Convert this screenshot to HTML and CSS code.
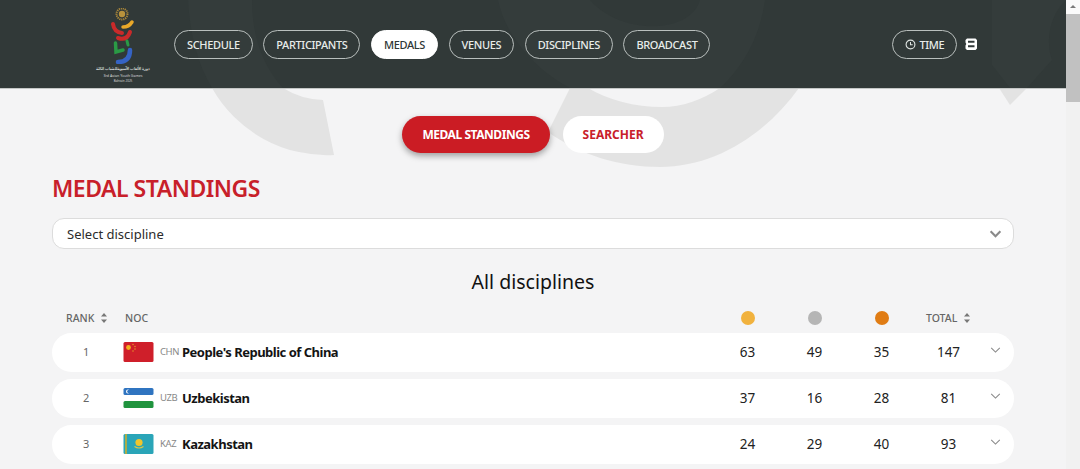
FILE: index.html
```html
<!DOCTYPE html>
<html lang="en">
<head>
<meta charset="utf-8">
<title>Medal Standings</title>
<link rel="stylesheet" href="styles.css">
</head>
<body>
<div class="shell">
  <div class="page">
    <svg class="watermark" viewBox="0 0 1066 469" width="1066" height="469" aria-hidden="true">
      <path d="M212 88 A132 132 0 0 0 334 155 L323 100 A80 80 0 0 1 283 88 Z" fill="#e3e3e3"/>
      <path d="M570 88 L548 132 C580 155 620 167 660 167 C715 167 765 135 799 88 L720 88 C702 100 682 107 662 107 C635 107 608 100 588 88 Z" fill="#e3e3e3"/>
      <path d="M999 88 L1010 105 L1027 88 Z" fill="#e3e3e3"/>
    </svg>
    <header class="topbar">
      <svg class="header-art" viewBox="0 0 1066 88" width="1066" height="88" aria-hidden="true">
        <path d="M188 0 C190 35 198 65 212 88 L283 88 C262 65 252 35 252 0 Z" fill="#343c3b"/>
        <path d="M498 0 C505 35 535 70 570 88 L720 88 C745 65 760 35 765 0 L700 0 C690 35 620 35 590 0 Z" fill="#343c3b"/>
        <path d="M992 0 L992 65 L1010 88 L1027 88 L1052 60 C1045 40 1050 15 1066 0 Z" fill="#343c3b"/>
      </svg>
      <div class="logo">
        <svg class="logo-mark" viewBox="0 0 40 56" width="40" height="56" aria-hidden="true">
          <circle cx="19" cy="6" r="5.500" fill="none" stroke="#a8863a" stroke-width="2" stroke-dasharray="1.200 .8"/>
          <circle cx="19" cy="6" r="3.200" fill="#b8923c"/>
          <path d="M10 16 Q11 24 19 25" stroke="#c92a2a" stroke-width="4" fill="none" stroke-linecap="round"/>
          <path d="M20 19 Q26 19 29 14" stroke="#e9a829" stroke-width="3.500" fill="none" stroke-linecap="round"/>
          <path d="M15 30 Q24 33 27 24" stroke="#c92a2a" stroke-width="4" fill="none" stroke-linecap="round"/>
          <path d="M12.500 35 L13 44 L20 42" stroke="#2a9a45" stroke-width="3.500" fill="none" stroke-linecap="round"/>
          <path d="M24 33 L25 37" stroke="#2a9a45" stroke-width="3" fill="none" stroke-linecap="round"/>
          <path d="M27 42 Q27 54 15 54" stroke="#3563c4" stroke-width="4.500" fill="none" stroke-linecap="round"/>
        </svg>
        <span class="logo-line logo-strong">دورة الألعاب الآسيوية للشباب الثالثة</span>
        <span class="logo-line">3rd Asian Youth Games</span>
        <span class="logo-line logo-tiny">Bahrain 2025</span>
      </div>
      <nav class="nav">
        <a class="pill">SCHEDULE</a>
        <a class="pill">PARTICIPANTS</a>
        <a class="pill pill-active">MEDALS</a>
        <a class="pill">VENUES</a>
        <a class="pill">DISCIPLINES</a>
        <a class="pill">BROADCAST</a>
      </nav>
      <div class="tools">
        <a class="pill pill-time">
          <svg viewBox="0 0 12 12" width="11" height="11" aria-hidden="true"><circle cx="6" cy="6" r="4.800" fill="none" stroke="#dfe5e2" stroke-width="1.200"/><path d="M6 3.200V6.200H8.400" fill="none" stroke="#dfe5e2" stroke-width="1.100"/></svg>
          TIME
        </a>
        <svg class="tool-icon" viewBox="0 0 12 12" width="12" height="12" aria-hidden="true"><path fill="#fff" fill-rule="evenodd" d="M2 .5H10.500L12 2V10.500L10.500 12H2L.5 10.500V7.500L1.300 6 .5 4.500V2ZM3 2.700V4.800H9.500V2.700ZM3 7.200V9.300H9.500V7.200Z"/></svg>
      </div>
    </header>
    <main class="content">
      <div class="tabs">
        <a class="tab tab-on">MEDAL STANDINGS</a>
        <a class="tab">SEARCHER</a>
      </div>
      <h1 class="title">MEDAL STANDINGS</h1>
      <div class="select">
        <span>Select discipline</span>
        <svg viewBox="0 0 14 9" width="13" height="8" aria-hidden="true"><path d="M1.500 1.500 7 7 12.500 1.500" fill="none" stroke="#8a8a8a" stroke-width="2.400"/></svg>
      </div>
      <h2 class="subtitle">All disciplines</h2>
      <div class="row-head">
        <div class="c-rank head">RANK
          <svg class="sort" viewBox="0 0 8 12" width="8" height="12" aria-hidden="true"><path d="M4 1 7 4.500H1ZM4 11 1 7.500H7Z" fill="#777"/></svg>
        </div>
        <div class="c-noc head head-noc">NOC</div>
        <div class="c-num"><span class="medal gold"></span></div>
        <div class="c-num"><span class="medal silver"></span></div>
        <div class="c-num"><span class="medal bronze"></span></div>
        <div class="c-total head">TOTAL
          <svg class="sort" viewBox="0 0 8 12" width="8" height="12" aria-hidden="true"><path d="M4 1 7 4.500H1ZM4 11 1 7.500H7Z" fill="#777"/></svg>
        </div>
      </div>
      <div class="row">
        <div class="c-rank rank">1</div>
        <div class="c-noc">
          <svg class="flag" viewBox="0 0 30 20" width="31" height="20" aria-hidden="true"><rect width="30" height="20" rx="1.500" fill="#cf1f2a"/><circle cx="5" cy="5.500" r="2.400" fill="#f2b21c"/><g fill="#e8a52a"><circle cx="9.500" cy="2.500" r=".7"/><circle cx="11.500" cy="4.500" r=".7"/><circle cx="11.500" cy="7" r=".7"/><circle cx="9.500" cy="9" r=".7"/></g></svg>
          <span class="code">CHN</span><span class="name">People's Republic of China</span>
        </div>
        <div class="c-num">63</div><div class="c-num">49</div><div class="c-num">35</div><div class="c-total num">147</div>
        <svg class="expand" viewBox="0 0 12 7" width="11" height="6" aria-hidden="true"><path d="M1 1 6 6 11 1" fill="none" stroke="#888" stroke-width="1.200"/></svg>
      </div>
      <div class="row">
        <div class="c-rank rank">2</div>
        <div class="c-noc">
          <svg class="flag" viewBox="0 0 30 20" width="31" height="20" aria-hidden="true"><rect width="30" height="7" rx="1.500" fill="#2f74c0"/><rect y="7" width="30" height="6" fill="#fff"/><rect y="13" width="30" height="7" rx="1.500" fill="#20943e"/><circle cx="4.500" cy="3.500" r="2" fill="#fff"/><circle cx="5.500" cy="3.500" r="1.800" fill="#2f74c0"/></svg>
          <span class="code">UZB</span><span class="name">Uzbekistan</span>
        </div>
        <div class="c-num">37</div><div class="c-num">16</div><div class="c-num">28</div><div class="c-total num">81</div>
        <svg class="expand" viewBox="0 0 12 7" width="11" height="6" aria-hidden="true"><path d="M1 1 6 6 11 1" fill="none" stroke="#888" stroke-width="1.200"/></svg>
      </div>
      <div class="row">
        <div class="c-rank rank">3</div>
        <div class="c-noc">
          <svg class="flag" viewBox="0 0 30 20" width="31" height="20" aria-hidden="true"><rect width="30" height="20" rx="1.500" fill="#2aa5b8"/><rect x="1.500" width="2" height="20" fill="#a9ad4a"/><circle cx="15.500" cy="8.500" r="3.600" fill="#f0c52c"/><path d="M11 12.500Q15.500 15.500 20 12.500" stroke="#e4c73c" fill="none" stroke-width="1.200"/></svg>
          <span class="code">KAZ</span><span class="name">Kazakhstan</span>
        </div>
        <div class="c-num">24</div><div class="c-num">29</div><div class="c-num">40</div><div class="c-total num">93</div>
        <svg class="expand" viewBox="0 0 12 7" width="11" height="6" aria-hidden="true"><path d="M1 1 6 6 11 1" fill="none" stroke="#888" stroke-width="1.200"/></svg>
      </div>
    </main>
  </div>
  <div class="scrollbar">
    <div class="scroll-up"></div>
    <div class="scroll-thumb"></div>
  </div>
</div>
</body>
</html>
```

FILE: styles.css
```css
* { box-sizing: border-box; }
html, body { margin: 0; height: 100%; overflow: hidden; }
body { font-family: "Noto Sans", "Open Sans", sans-serif; background: #f4f4f5; color: #1b1b1b; }
.shell { display: flex; width: 1080px; height: 469px; overflow: hidden; }
.page { position: relative; flex: 0 0 1066px; height: 469px; overflow: hidden; }
.watermark { position: absolute; left: 0; top: 0; }
.topbar { position: relative; height: 89px; background: #313938; border-bottom: 1px solid #c4c7c6; display: flex; align-items: center; padding-left: 88px; }
.header-art { position: absolute; left: 0; top: 0; }
.logo { position: relative; width: 70px; margin-right: 16px; height: 84px; display: flex; flex-direction: column; align-items: center; color: #d8d8d8; font-size: 3.600px; line-height: 6.500px; padding-top: 6px; white-space: nowrap; }
.logo-mark { margin-bottom: 2px; flex: none; }
.logo-strong { font-weight: 700; }
.logo-tiny { font-size: 3px; line-height: 5px; }
.nav { position: relative; display: flex; gap: 10.500px; }
.pill { height: 29px; padding: 0 12px; border: 1px solid #b9bfbd; border-radius: 15px; display: inline-flex; align-items: center; gap: 3px; font-size: 11px; font-weight: 500; letter-spacing: -.35px; color: #e8ecea; white-space: nowrap; }
.pill-active { background: #fff; border-color: #fff; color: #2f3736; }
.tools { position: relative; margin-left: 182px; display: flex; align-items: center; gap: 8px; }
.tool-icon { display: block; }
.content { position: relative; padding: 27px 52px 0; }
.tabs { display: flex; justify-content: center; gap: 13px; }
.tab { height: 37px; padding: 0 20px; border-radius: 19px; background: #fff; color: #c8202a; display: flex; align-items: center; font-size: 12px; font-weight: 700; }
.tab-on { background: #cb1c24; color: #fff; letter-spacing: -.45px; box-shadow: 0 3px 6px rgba(0,0,0,.35); }
.title { margin: 21px 0 0; font-size: 23px; line-height: 28px; font-weight: 600; color: #c8202a; letter-spacing: -.5px; }
.select { margin-top: 16px; height: 31px; background: #fff; border: 1px solid #dcdcdc; border-radius: 12px; display: flex; align-items: center; justify-content: space-between; padding: 1px 11px 0 14px; font-size: 13px; color: #2b2b2b; }
.subtitle { margin: 20px 0 0; text-align: center; font-size: 19.500px; line-height: 26px; font-weight: 400; color: #111; }
.row-head, .row { display: grid; grid-template-columns: 71px 1fr 67px 67px 67px 67px 32px; align-items: center; }
.row-head { margin: 10px 0 2px; height: 26px; }
.head { font-size: 10.500px; color: #666; font-weight: 500; white-space: nowrap; }
.head-noc { padding-left: 2px; }
.sort { vertical-align: -2px; margin-left: 3px; }
.c-rank { padding-left: 14px; }
.c-noc { display: flex; align-items: center; }
.c-num { text-align: center; font-size: 13.500px; color: #222; }
.c-total { text-align: center; }
.medal { display: block; width: 14px; height: 14px; margin: 0 auto 1px; border-radius: 50%; }
.gold { background: #f1b23e; }
.silver { background: #b5b5b5; }
.bronze { background: #e07c14; }
.row { position: relative; height: 39px; margin-bottom: 7px; padding-bottom: 2px; background: #fff; border-radius: 20px; }
.rank { font-size: 11px; color: #666; padding-left: 31px; }
.flag { display: block; flex: none; margin-right: 6px; }
.code { font-size: 9.500px; letter-spacing: -.4px; color: #888; width: 22px; }
.name { font-size: 13px; font-weight: 700; color: #141414; letter-spacing: -.5px; white-space: nowrap; }
.num { font-size: 13.500px; color: #222; }
.expand { position: absolute; right: 13px; top: 14px; }
.scrollbar { flex: 0 0 14px; background: #f1f1f1; }
.scroll-up { height: 14px; background: #fafafa; position: relative; }
.scroll-up::after { content: ""; position: absolute; left: 4px; top: 5px; border: 3px solid transparent; border-top: 0; border-bottom: 3px solid #7a7a7a; }
.scroll-thumb { height: 88px; background: #c1c1c1; }
```
